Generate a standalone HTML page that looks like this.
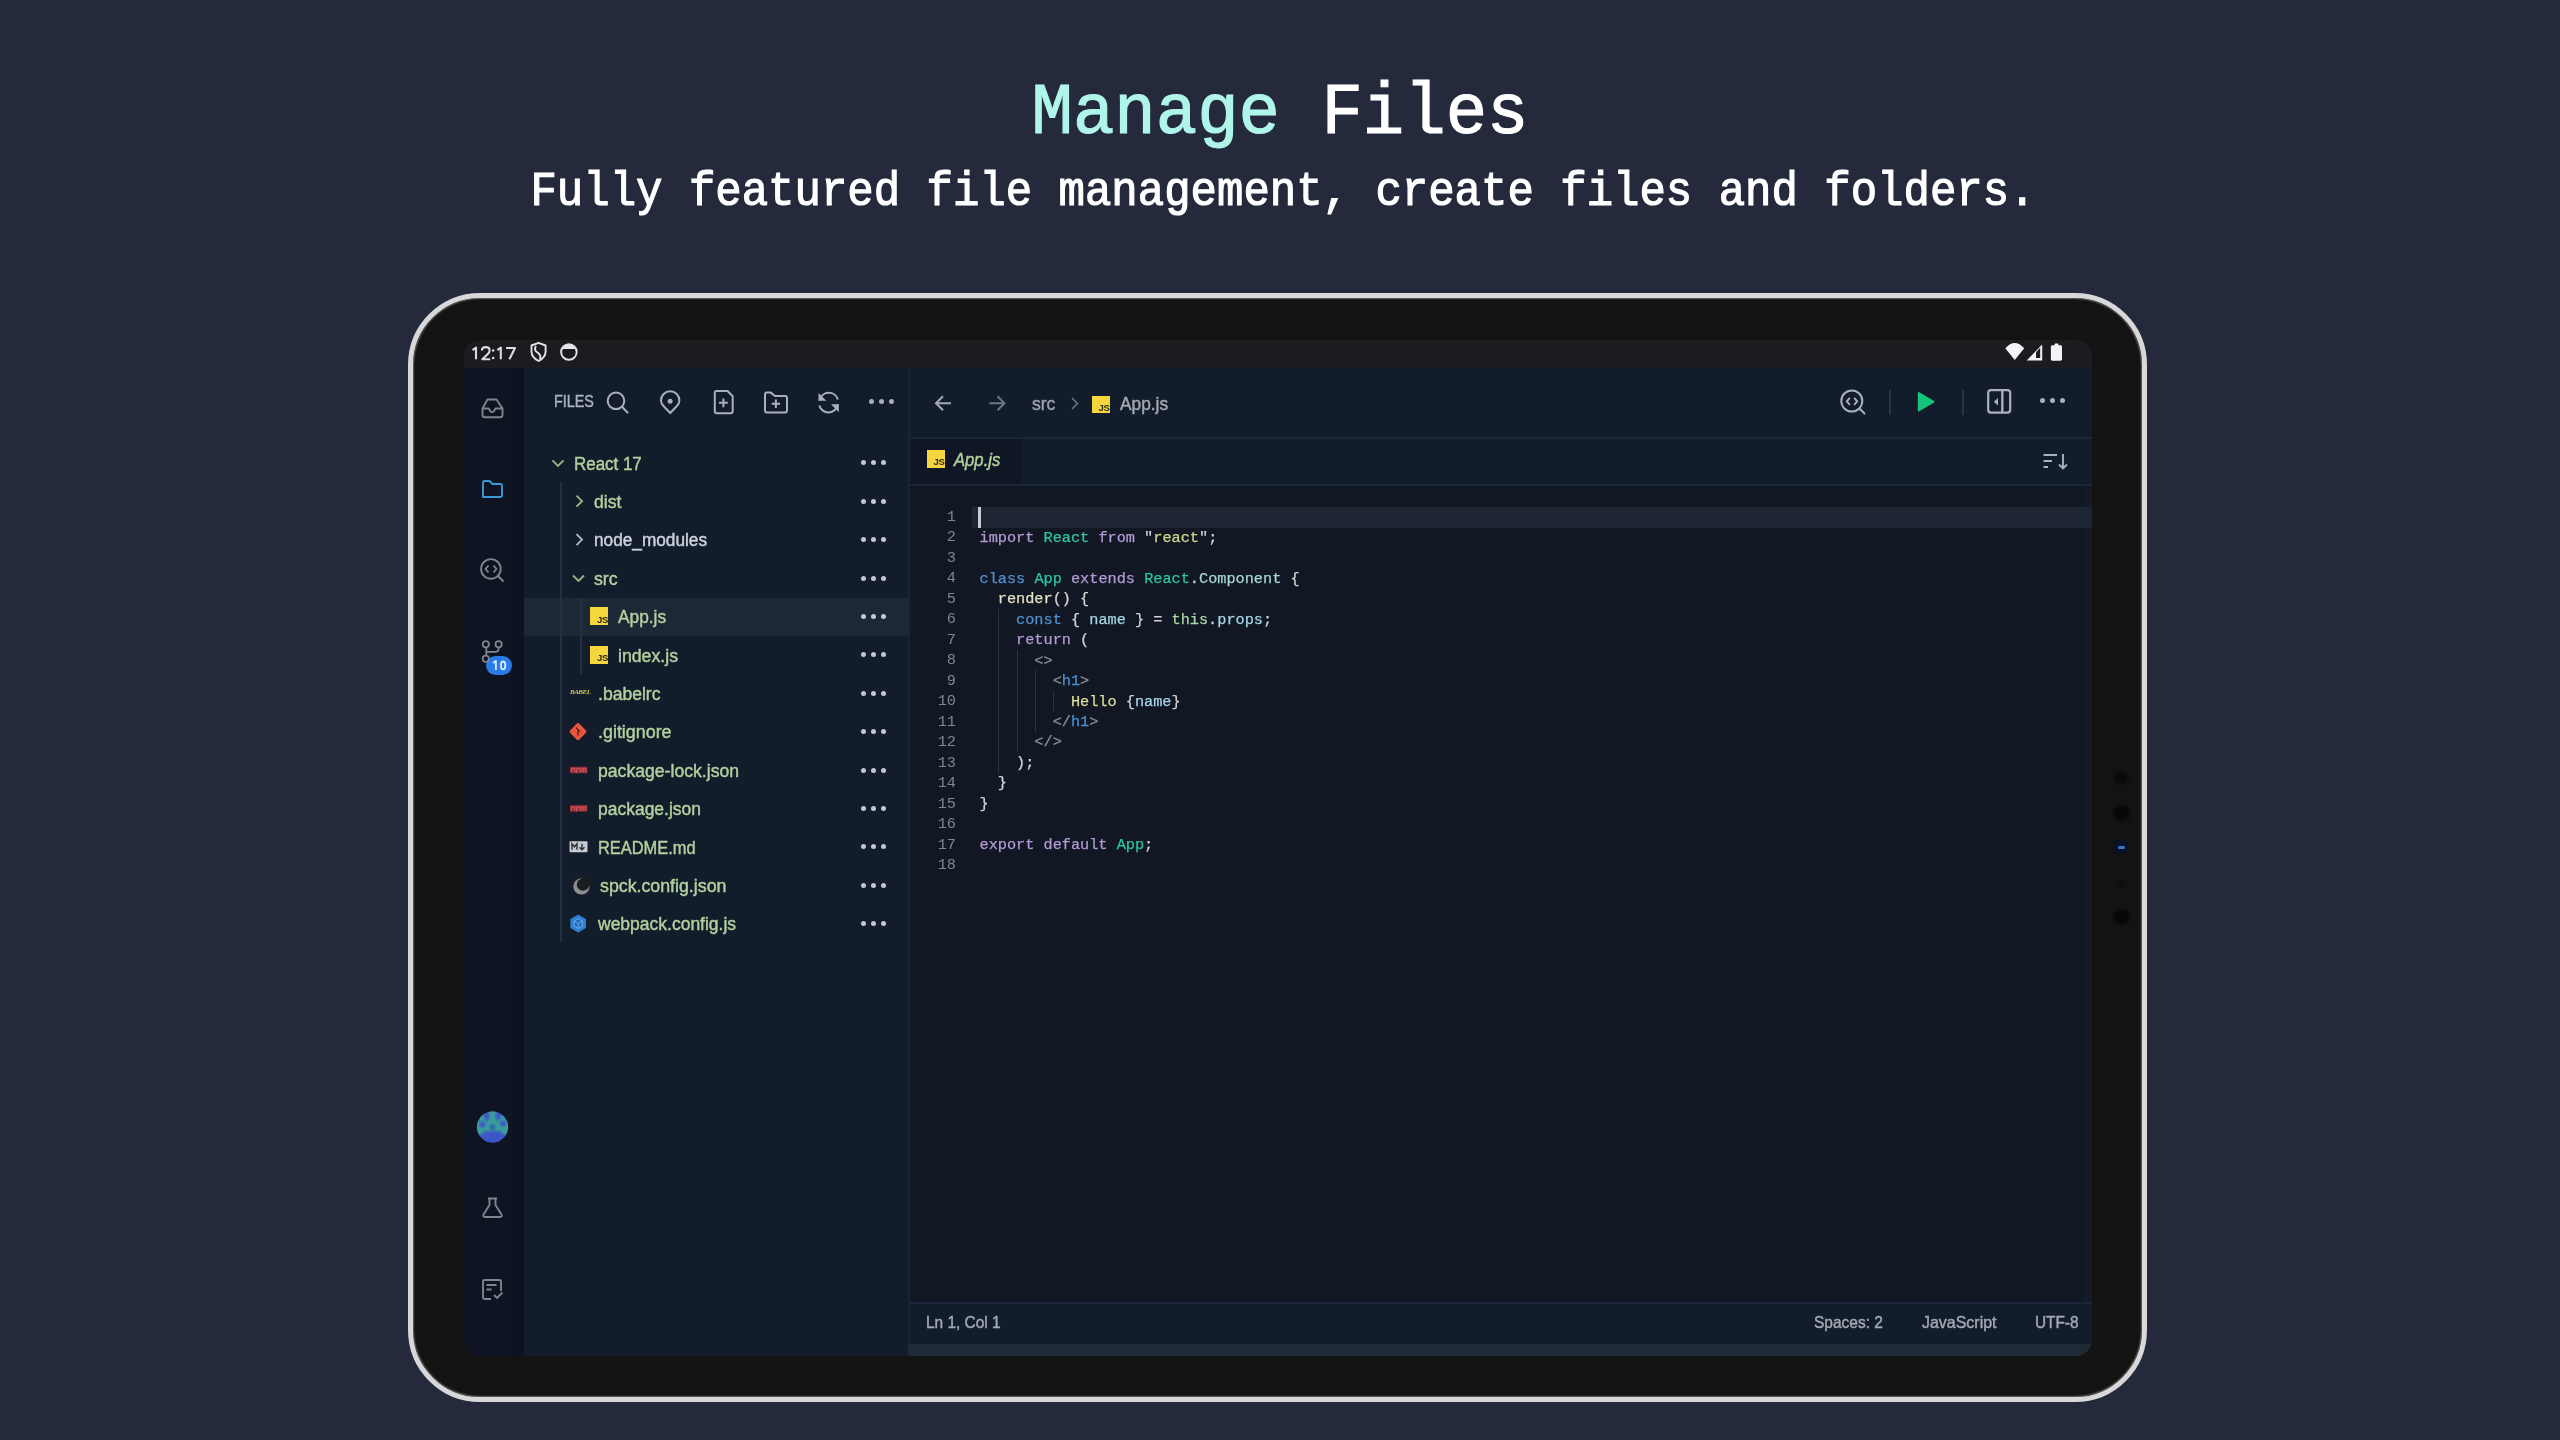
<!DOCTYPE html>
<html><head><meta charset="utf-8"><style>
html,body{margin:0;padding:0}
body{width:2560px;height:1440px;background:#24293b;position:relative;overflow:hidden;font-family:"Liberation Sans",sans-serif}
.a{position:absolute}
#title{will-change:transform;position:absolute;left:0;width:2560px;top:70px;transform:scaleY(1.05);transform-origin:50% 62px;text-align:center;font-family:"Liberation Mono",monospace;font-size:69px;line-height:90px;color:#fff;white-space:pre;-webkit-text-stroke:1.1px currentColor}
#title .m{color:#aff5ea}
#sub{will-change:transform;position:absolute;left:3px;width:2560px;top:164.5px;transform:scaleY(1.11);transform-origin:50% 39px;text-align:center;font-family:"Liberation Mono",monospace;font-size:44px;line-height:56px;color:#fff;white-space:pre;-webkit-text-stroke:1.1px currentColor}
#frame{position:absolute;left:408px;top:293px;width:1739px;height:1109px;box-sizing:border-box;border:5px solid #d8d8da;border-radius:72px;background:#131313;box-shadow:inset 0 0 1.5px 1px rgba(110,110,106,0.9)}
#screen{position:absolute;left:464px;top:340px;width:1628px;height:1016px;border-radius:16px;overflow:hidden;background:#111823}
#pc{position:absolute;left:-464px;top:-340px;width:2560px;height:1440px;will-change:transform}
svg.i{position:absolute;left:0;top:0;width:2560px;height:1440px;overflow:visible}
.t{position:absolute;white-space:pre;font-size:18px;line-height:22px;color:#b3cf9e;-webkit-text-stroke:0.45px currentColor;transform-origin:0 50%}
.d{position:absolute;width:5px;height:5px;border-radius:50%;background:#c3c8d0}
.code{position:absolute;left:979.5px;top:507.3px;font-family:"Liberation Mono",monospace;font-size:15.24px;white-space:pre;color:#d4d4d4;line-height:20.47px;-webkit-text-stroke:0.25px currentColor}
.ln{position:absolute;left:900px;top:507px;width:56px;text-align:right;font-family:"Liberation Mono",monospace;font-size:15.24px;color:#7f8690;line-height:20.47px;white-space:pre}
.kw{color:#b49ad6}.bl{color:#4f8fd0}.cl{color:#2ec4a4}.fn{color:#e6e2c4}.st{color:#d1d88a}.vr{color:#a5d6e8}.gy{color:#8a8f98}.th{color:#a9d8a5}.cp{color:#a8d8d0}.hy{color:#dcdc9a}
.g{position:absolute;width:1px;background:#2b3441}
</style></head><body>
<div id="title"><span class="m">Manage</span> Files</div>
<div id="sub">Fully featured file management, create files and folders.</div>
<div id="frame"></div>
<div id="screen"><div id="pc">
<div class="a" style="left:464px;top:340px;width:1628px;height:28px;background:#1c1b20"></div>
<div class="a" style="left:464px;top:368px;width:60px;height:988px;background:#0e1421"></div>
<div class="a" style="left:512px;top:368px;width:12px;height:988px;background:#0c1220"></div>
<div class="a" style="left:524px;top:368px;width:384px;height:988px;background:#121c2b"></div>
<div class="a" style="left:908px;top:368px;width:1184px;height:988px;background:#121c2b"></div>
<div class="a" style="left:908px;top:368px;width:2px;height:988px;background:#1a2433"></div>
<div class="a" style="left:910px;top:437px;width:1182px;height:2px;background:#1b2738"></div>
<div class="a" style="left:910px;top:439px;width:111px;height:45px;background:#0f1724"></div>
<div class="a" style="left:910px;top:484px;width:1182px;height:2px;background:#1b2738"></div>
<div class="a" style="left:910px;top:486px;width:1182px;height:816px;background:#111823"></div>
<div class="a" style="left:910px;top:1302px;width:1182px;height:2px;background:#1b2738"></div>
<div class="a" style="left:908px;top:1344px;width:1184px;height:12px;background:#1f2a37"></div>
<div class="t" style="left:553.5px;top:391.3px;font-size:16.6px;color:#a9b1bc;transform:scaleX(0.865)">FILES</div>
<div class="d" style="left:869.1px;top:399.1px;background:#aab1bb"></div><div class="d" style="left:879.1px;top:399.1px;background:#aab1bb"></div><div class="d" style="left:889.1px;top:399.1px;background:#aab1bb"></div>
<div class="a" style="left:524px;top:598px;width:384px;height:38px;background:#1e2735"></div>
<div class="a" style="left:559.5px;top:482px;width:2px;height:460px;background:#233042"></div>
<div class="a" style="left:579.5px;top:598px;width:2px;height:76px;background:#233042"></div>
<div class="t" style="left:574px;top:452.5px;color:#b3cf9e;transform:scaleX(0.941)">React 17</div>
<div class="d" style="left:861.0px;top:460.3px;background:#c3c8d0"></div><div class="d" style="left:871.0px;top:460.3px;background:#c3c8d0"></div><div class="d" style="left:881.0px;top:460.3px;background:#c3c8d0"></div>
<div class="t" style="left:594px;top:490.9px;color:#b3cf9e;transform:scaleX(0.976)">dist</div>
<div class="d" style="left:861.0px;top:498.7px;background:#c3c8d0"></div><div class="d" style="left:871.0px;top:498.7px;background:#c3c8d0"></div><div class="d" style="left:881.0px;top:498.7px;background:#c3c8d0"></div>
<div class="t" style="left:594px;top:529.3px;color:#ccd3dd;transform:scaleX(0.957)">node_modules</div>
<div class="d" style="left:861.0px;top:537.1px;background:#c3c8d0"></div><div class="d" style="left:871.0px;top:537.1px;background:#c3c8d0"></div><div class="d" style="left:881.0px;top:537.1px;background:#c3c8d0"></div>
<div class="t" style="left:594px;top:567.7px;color:#b3cf9e;transform:scaleX(0.983)">src</div>
<div class="d" style="left:861.0px;top:575.5px;background:#c3c8d0"></div><div class="d" style="left:871.0px;top:575.5px;background:#c3c8d0"></div><div class="d" style="left:881.0px;top:575.5px;background:#c3c8d0"></div>
<div class="t" style="left:618px;top:606.1px;color:#b3cf9e;transform:scaleX(0.96)">App.js</div>
<div class="d" style="left:861.0px;top:613.9px;background:#c3c8d0"></div><div class="d" style="left:871.0px;top:613.9px;background:#c3c8d0"></div><div class="d" style="left:881.0px;top:613.9px;background:#c3c8d0"></div>
<div class="a" style="left:590px;top:607.4px;width:18px;height:18px;background:#f5d63d"></div>
<div class="a" style="left:597px;top:614.9px;font-size:9.5px;line-height:10px;color:#2e2a18;font-weight:bold;letter-spacing:-0.4px">JS</div>
<div class="t" style="left:618px;top:644.5px;color:#b3cf9e;transform:scaleX(0.983)">index.js</div>
<div class="d" style="left:861.0px;top:652.3px;background:#c3c8d0"></div><div class="d" style="left:871.0px;top:652.3px;background:#c3c8d0"></div><div class="d" style="left:881.0px;top:652.3px;background:#c3c8d0"></div>
<div class="a" style="left:590px;top:645.8px;width:18px;height:18px;background:#f5d63d"></div>
<div class="a" style="left:597px;top:653.3px;font-size:9.5px;line-height:10px;color:#2e2a18;font-weight:bold;letter-spacing:-0.4px">JS</div>
<div class="t" style="left:598px;top:682.9px;color:#b3cf9e;transform:scaleX(0.975)">.babelrc</div>
<div class="d" style="left:861.0px;top:690.7px;background:#c3c8d0"></div><div class="d" style="left:871.0px;top:690.7px;background:#c3c8d0"></div><div class="d" style="left:881.0px;top:690.7px;background:#c3c8d0"></div>
<div class="a" style="left:570px;top:687.7px;font-size:7px;line-height:8px;color:#cfc25a;font-style:italic;font-weight:bold;letter-spacing:-0.5px;font-family:'Liberation Serif'">BABEL</div>
<div class="t" style="left:598px;top:721.3px;color:#b3cf9e;transform:scaleX(0.993)">.gitignore</div>
<div class="d" style="left:861.0px;top:729.1px;background:#c3c8d0"></div><div class="d" style="left:871.0px;top:729.1px;background:#c3c8d0"></div><div class="d" style="left:881.0px;top:729.1px;background:#c3c8d0"></div>
<div class="t" style="left:598px;top:759.7px;color:#b3cf9e;transform:scaleX(0.979)">package-lock.json</div>
<div class="d" style="left:861.0px;top:767.5px;background:#c3c8d0"></div><div class="d" style="left:871.0px;top:767.5px;background:#c3c8d0"></div><div class="d" style="left:881.0px;top:767.5px;background:#c3c8d0"></div>
<div class="t" style="left:598px;top:798.1px;color:#b3cf9e;transform:scaleX(0.971)">package.json</div>
<div class="d" style="left:861.0px;top:805.9px;background:#c3c8d0"></div><div class="d" style="left:871.0px;top:805.9px;background:#c3c8d0"></div><div class="d" style="left:881.0px;top:805.9px;background:#c3c8d0"></div>
<div class="t" style="left:598px;top:836.5px;color:#b3cf9e;transform:scaleX(0.912)">README.md</div>
<div class="d" style="left:861.0px;top:844.3px;background:#c3c8d0"></div><div class="d" style="left:871.0px;top:844.3px;background:#c3c8d0"></div><div class="d" style="left:881.0px;top:844.3px;background:#c3c8d0"></div>
<div class="t" style="left:600px;top:874.9px;color:#b3cf9e;transform:scaleX(0.987)">spck.config.json</div>
<div class="d" style="left:861.0px;top:882.7px;background:#c3c8d0"></div><div class="d" style="left:871.0px;top:882.7px;background:#c3c8d0"></div><div class="d" style="left:881.0px;top:882.7px;background:#c3c8d0"></div>
<div class="t" style="left:598px;top:913.3px;color:#b3cf9e;transform:scaleX(0.972)">webpack.config.js</div>
<div class="d" style="left:861.0px;top:921.1px;background:#c3c8d0"></div><div class="d" style="left:871.0px;top:921.1px;background:#c3c8d0"></div><div class="d" style="left:881.0px;top:921.1px;background:#c3c8d0"></div>
<div class="a" style="left:486px;top:656px;width:25.7px;height:19px;border-radius:9.5px;background:#2b7be6"></div>
<svg class="i"><path d="M493,663 L495.9,661 V670" fill="none" stroke="#d6ebff" stroke-width="1.8" stroke-linejoin="round"/><ellipse cx="503.1" cy="665.4" rx="2.2" ry="3.9" fill="none" stroke="#d6ebff" stroke-width="1.8"/></svg>
<div class="t" style="left:1032px;top:393px;color:#9aa1ab;transform:scaleX(0.975)">src</div>
<div class="a" style="left:1092px;top:395.5px;width:18px;height:17px;background:#f5d63d"></div>
<div class="a" style="left:1098.5px;top:402.5px;font-size:9.5px;line-height:10px;color:#2e2a18;font-weight:bold;letter-spacing:-0.4px">JS</div>
<div class="t" style="left:1120px;top:392.5px;color:#a2a9b3;transform:scaleX(0.96)">App.js</div>
<div class="a" style="left:1888.6px;top:390.3px;width:2px;height:25px;background:#293343"></div>
<div class="a" style="left:1961.6px;top:390.3px;width:2px;height:25px;background:#293343"></div>
<div class="d" style="left:2039.7px;top:398.4px;background:#aab1bb"></div><div class="d" style="left:2049.7px;top:398.4px;background:#aab1bb"></div><div class="d" style="left:2059.7px;top:398.4px;background:#aab1bb"></div>
<div class="a" style="left:927px;top:449.6px;width:18px;height:18px;background:#f5d63d"></div>
<div class="a" style="left:933.5px;top:457px;font-size:9.5px;line-height:10px;color:#2e2a18;font-weight:bold;letter-spacing:-0.4px">JS</div>
<div class="t" style="left:954px;top:448.5px;font-style:italic;color:#b3cf9e;transform:scaleX(0.925)">App.js</div>
<div class="a" style="left:2083px;top:486px;width:9px;height:816px;background:#141b27"></div>
<div class="a" style="left:972px;top:507px;width:1120px;height:20.5px;background:#1f2633"></div>
<div class="a" style="left:978px;top:507px;width:2.5px;height:20.5px;background:#c8ccd2"></div>
<div class="ln">1
2
3
4
5
6
7
8
9
10
11
12
13
14
15
16
17
18</div>
<div class="code">
<span class="kw">import</span> <span class="cl">React</span> <span class="kw">from</span> "<span class="st">react</span>";

<span class="bl">class</span> <span class="cl">App</span> <span class="kw">extends</span> <span class="cl">React</span>.<span class="cp">Component</span> {
  <span class="fn">render</span>() {
    <span class="bl">const</span> { <span class="vr">name</span> } = <span class="th">this</span>.<span class="vr">props</span>;
    <span class="kw">return</span> (
      <span class="gy">&lt;&gt;</span>
        <span class="gy">&lt;</span><span class="bl">h1</span><span class="gy">&gt;</span>
          <span class="hy">Hello</span> {<span class="vr">name</span>}
        <span class="gy">&lt;/</span><span class="bl">h1</span><span class="gy">&gt;</span>
      <span class="gy">&lt;/&gt;</span>
    );
  }
}

<span class="kw">export</span> <span class="kw">default</span> <span class="cl">App</span>;
</div>
<div class="g" style="left:998px;top:608.9px;height:163.8px"></div>
<div class="g" style="left:1016.5px;top:649.8px;height:102.3px"></div>
<div class="g" style="left:1035px;top:670.3px;height:61.4px"></div>
<div class="g" style="left:1053px;top:690.7px;height:20.5px"></div>
<div class="t" style="left:925.7px;top:1312.3px;font-size:16.6px;color:#a2a9b3;transform:scaleX(0.93)">Ln 1, Col 1</div>
<div class="t" style="left:1814.2px;top:1312.3px;font-size:16.6px;color:#a2a9b3;transform:scaleX(0.934)">Spaces: 2</div>
<div class="t" style="left:1922.2px;top:1312.3px;font-size:16.6px;color:#a2a9b3;transform:scaleX(0.962)">JavaScript</div>
<div class="t" style="left:2035.1px;top:1312.3px;font-size:16.6px;color:#a2a9b3;transform:scaleX(0.926)">UTF-8</div>
<svg class="i"><path d="M472.6,350.2 L476,347.6 V359.2 M481.9,350.6 Q481.9,347.1 485.8,347.1 Q489.6,347.1 489.6,350.4 Q489.6,352.2 487.6,354.2 L482.3,359.2 H490.2 M497.4,350.2 L500.8,347.6 V359.2 M506.1,348 H515 L509.4,359.2" fill="none" stroke="#dcdcde" stroke-width="2.1" stroke-linejoin="round"/><circle cx="493.1" cy="350.6" r="1.25" fill="#dcdcde"/><circle cx="493.1" cy="358" r="1.25" fill="#dcdcde"/><path d="M552.5,460.3 L558,465.8 L563.5,460.3" fill="none" stroke="#b3cf9e" stroke-opacity="0.85" stroke-width="1.9"/><path d="M576.5,495.7 L582,501.2 L576.5,506.7" fill="none" stroke="#b3cf9e" stroke-opacity="0.85" stroke-width="1.9"/><path d="M576.5,534.1 L582,539.6 L576.5,545.1" fill="none" stroke="#ccd3dd" stroke-opacity="0.85" stroke-width="1.9"/><path d="M573.0,575.5 L578.5,581.0 L584.0,575.5" fill="none" stroke="#b3cf9e" stroke-opacity="0.85" stroke-width="1.9"/><rect x="571.5" y="725.1" width="13" height="13" rx="2" transform="rotate(45 578 731.6)" fill="#e8553a"/><path d="M576,727.6 L580,731.6 M578,730.6 L578,735.6" stroke="#4a1a10" stroke-width="1.2" fill="none"/><rect x="570" y="766.8" width="17.3" height="6.4" fill="#9a3037"/><path d="M571.5,772.2 v-3.6 h3.4 v3.6 M576.5,773.0 v-4.4 h3.6 v3.4 M581.6,772.2 v-3.6 h4.2 v3.6 M583.7,768.6 v3.6" stroke="#c9575d" stroke-width="1" fill="none"/><rect x="570" y="805.1999999999999" width="17.3" height="6.4" fill="#9a3037"/><path d="M571.5,810.6 v-3.6 h3.4 v3.6 M576.5,811.4 v-4.4 h3.6 v3.4 M581.6,810.6 v-3.6 h4.2 v3.6 M583.7,807.0 v3.6" stroke="#c9575d" stroke-width="1" fill="none"/><rect x="569.5" y="841.3" width="18" height="11" rx="1" fill="#c8ccd2"/><path d="M572,849.8 v-6 l2.5,3 l2.5,-3 v6 M582,843.8 v6 M579.5,847.3 l2.5,2.5 l2.5,-2.5" stroke="#2a2f38" stroke-width="1.4" fill="none"/><circle cx="581.4" cy="886.0" r="9.2" fill="#202326"/><circle cx="581.4" cy="886.5" r="8" fill="#8d8e90"/><circle cx="583" cy="884.6" r="6.2" fill="#1a1d21"/><path d="M581.4,877.2 A8.5,8.5 0 0 1 589.9,885.2 L583,884.6 Z" fill="#1a1d21"/><path d="M578.2,914.6 L586,919.1 V928.1 L578.2,932.6 L570.4,928.1 V919.1 Z" fill="#2f7fd2"/><path d="M578.2,918.8000000000001 L582.3,921.2 V926.0 L578.2,928.4 L574.1,926.0 V921.2 Z M578.2,923.6 L582.3,921.2 M578.2,923.6 V928.4 M578.2,923.6 L574.1,921.2" fill="#2467b8" stroke="#6ab8f0" stroke-width="0.9"/><path d="M482.5,408.5 L487.5,399.5 H496.5 L502.5,408.5" fill="none" stroke="#7d8591" stroke-width="1.9" stroke-linejoin="round"/><path d="M482.5,408.5 V415 Q482.5,417.2 484.7,417.2 H500.3 Q502.5,417.2 502.5,415 V408.5 H495.5 L494,411 Q493.3,412 492.2,412 H492 Q490.8,412 490.2,411 L488.7,408.5 Z" fill="none" stroke="#7d8591" stroke-width="1.9" stroke-linejoin="round"/><path d="M483,497 V482.5 Q483,481 484.5,481 H489.5 L492.5,484 H500.5 Q502,484 502,485.5 V495.5 Q502,497 500.5,497 Z" fill="none" stroke="#3b9ad8" stroke-width="1.9" stroke-linejoin="round"/><circle cx="490.9" cy="568.9" r="9.8" fill="none" stroke="#7d8591" stroke-width="1.9"/><path d="M498,576 L503,581" stroke="#7d8591" stroke-width="1.9" stroke-linecap="round"/><path d="M488.5,565.5 L485.5,569 L488.5,572.5 M493.5,565.5 L496.5,569 L493.5,572.5" fill="none" stroke="#7d8591" stroke-width="1.8"/><circle cx="485.8" cy="644.3" r="3.1" fill="none" stroke="#7d8591" stroke-width="1.8"/><circle cx="498.6" cy="644.3" r="3.1" fill="none" stroke="#7d8591" stroke-width="1.8"/><circle cx="485.8" cy="658.8" r="3.1" fill="none" stroke="#7d8591" stroke-width="1.8"/><path d="M486.3,647.4 V655.7 M486.3,651.8 H495.5 Q498.6,651.8 498.6,648.7 V647.4" fill="none" stroke="#7d8591" stroke-width="1.8"/><defs><clipPath id="avc"><circle cx="492.5" cy="1127" r="15.6"/></clipPath><filter id="avb" x="-20%" y="-20%" width="140%" height="140%"><feGaussianBlur stdDeviation="1.1"/></filter></defs><g clip-path="url(#avc)"><rect x="476" y="1110" width="33" height="34" fill="#3d56c6"/><g filter="url(#avb)"><rect x="470" y="1121" width="45" height="10" fill="#3a9e98"/><rect x="488.5" y="1108" width="8" height="15" fill="#3a9e98"/><circle cx="482.5" cy="1117.5" r="4" fill="#3a9e98"/><circle cx="502.5" cy="1118.5" r="4" fill="#3a9e98"/><circle cx="480" cy="1131" r="3.5" fill="#3a9e98"/><circle cx="504.5" cy="1131" r="3.5" fill="#3a9e98"/><circle cx="486.5" cy="1116" r="3.3" fill="#3d56c6"/><circle cx="498.5" cy="1116" r="3.3" fill="#3d56c6"/><circle cx="482.5" cy="1124.5" r="3.2" fill="#3d56c6"/><circle cx="503" cy="1123.5" r="3.2" fill="#3d56c6"/><circle cx="492.5" cy="1127" r="3.2" fill="#2f6aae"/><rect x="485" y="1132" width="15" height="14" fill="#3d56c6"/></g></g><path d="M488,1198.5 H497 M489.5,1198.5 V1205 L483.5,1214.5 Q482.5,1217 485,1217 H500 Q502.5,1217 501.5,1214.5 L495.5,1205 V1198.5" fill="none" stroke="#7d8591" stroke-width="1.9" stroke-linejoin="round"/><path d="M491,1299 H484.5 Q483,1299 483,1297.5 V1281.5 Q483,1280 484.5,1280 H499.5 Q501,1280 501,1281.5 V1291" fill="none" stroke="#7d8591" stroke-width="1.9" stroke-linejoin="round"/><path d="M486.5,1285 H496.5 M486.5,1289.5 H491.5 M494,1295 L497,1298 L502.5,1292.5" fill="none" stroke="#7d8591" stroke-width="1.9"/><circle cx="616" cy="400.8" r="8.3" fill="none" stroke="#aab1bb" stroke-width="2"/><path d="M622,406.8 L627.5,412.5" stroke="#aab1bb" stroke-width="2" stroke-linecap="round"/><path d="M670.2,413 L663.5,406 Q661,403.5 661,400.5 A9.2,9.2 0 0 1 679.4,400.5 Q679.4,403.5 676.9,406 Z" fill="none" stroke="#aab1bb" stroke-width="2" stroke-linejoin="round"/><circle cx="670.1" cy="401.2" r="2.5" fill="#aab1bb"/><path d="M716.5,391 H727.5 L732.7,396.2 V411 Q732.7,413.3 730.5,413.3 H717 Q714.8,413.3 714.8,411 V393 Q714.8,391 716.5,391 Z" fill="none" stroke="#aab1bb" stroke-width="2" stroke-linejoin="round"/><path d="M723.4,398.5 V407.2 M719,402.8 H727.8" stroke="#aab1bb" stroke-width="2"/><path d="M765,410.5 V394.5 Q765,392.4 767,392.4 H770.5 L775,396 H785 Q787,396 787,398 V410.5 Q787,412.4 785,412.4 H767 Q765,412.4 765,410.5 Z" fill="none" stroke="#aab1bb" stroke-width="2" stroke-linejoin="round"/><path d="M775.9,399.5 V408 M771.7,403.7 H780.1" stroke="#aab1bb" stroke-width="2"/><path d="M819.3,405.5 A9.5,9.5 0 0 0 837.8,404.5 M837.9,399.5 A9.5,9.5 0 0 0 819.5,400.5" fill="none" stroke="#aab1bb" stroke-width="2"/><path d="M818.5,393 V400.8 H826.3 Z" fill="#aab1bb"/><path d="M838.8,412.2 V404.3 H831 Z" fill="#aab1bb"/><path d="M936.5,403.2 H951 M943,396.2 L936,403.2 L943,410.2" fill="none" stroke="#a2a9b3" stroke-width="2"/><path d="M989.5,403.2 H1004 M997.5,396.2 L1004.5,403.2 L997.5,410.2" fill="none" stroke="#6e7682" stroke-width="2"/><path d="M1072,398 L1077.5,403.5 L1072,409" fill="none" stroke="#6e7682" stroke-width="1.6"/><circle cx="1851.8" cy="401" r="10.5" fill="none" stroke="#aab1bb" stroke-width="2"/><path d="M1859.5,408.5 L1864.5,413.5" stroke="#aab1bb" stroke-width="2" stroke-linecap="round"/><path d="M1849.8,397.8 L1846.8,401.3 L1849.8,404.8 M1854.2,397.8 L1857.2,401.3 L1854.2,404.8" fill="none" stroke="#aab1bb" stroke-width="1.9"/><path d="M1917.8,393 Q1917.8,391.5 1919.2,392.3 L1933.8,400.8 Q1935,401.8 1933.8,402.8 L1919.2,411.3 Q1917.8,412.1 1917.8,410.6 Z" fill="#16c47c"/><rect x="1988.2" y="390.2" width="22" height="22.4" rx="2.8" fill="none" stroke="#aab1bb" stroke-width="2.2"/><path d="M2002.3,390.5 V412.5" stroke="#aab1bb" stroke-width="2.4"/><path d="M1998,398 V405.5 L1993.8,401.75 Z" fill="#aab1bb"/><path d="M2043.5,455 H2057 M2043.5,461 H2052 M2043.5,467 H2048 M2063,454 V468.5 M2059,464.5 L2063,468.5 L2067,464.5" fill="none" stroke="#aab1bb" stroke-width="1.9"/><path d="M531.5,345.5 L538.6,342.8 L545.6,345.5 V351.5 Q545.6,357.5 538.6,361 Q531.5,357.5 531.5,351.5 Z" fill="none" stroke="#e4e4e6" stroke-width="1.9" stroke-linejoin="round"/><path d="M536,346 Q533.5,350 537.5,352.5 Q541.5,355 540,359.5" fill="none" stroke="#e4e4e6" stroke-width="1.9"/><circle cx="568.9" cy="352" r="7.8" fill="none" stroke="#e4e4e6" stroke-width="1.9"/><path d="M562.5,349 A7,7 0 0 1 575.3,349 Z" fill="#e8e8ea"/><path d="M2005.3,348.3 Q2014.75,337.8 2024.2,348.3 L2014.75,359.9 Z" fill="#f4f4f6"/><path d="M2026.7,360.5 L2042.2,344.4 V360.5 Z" fill="#f4f4f6"/><path d="M2036,358 V352.2 L2040.2,347.8 V358 Z" fill="#1c1b20"/><rect x="2050.9" y="345.3" width="11.1" height="15.4" rx="1.4" fill="#f4f4f6"/><rect x="2054.6" y="343.6" width="3.8" height="2.5" rx="0.6" fill="#f4f4f6"/></svg>
</div></div>
<div class="a" style="left:2114.0px;top:772.0px;width:14px;height:12px;border-radius:50%;background:#090909;filter:blur(1.5px)"></div>
<div class="a" style="left:2112.5px;top:805.5px;width:17px;height:15px;border-radius:50%;background:#070707;filter:blur(1.5px)"></div>
<div class="a" style="left:2117.5px;top:881.5px;width:7px;height:5px;border-radius:50%;background:#0c0c0c;filter:blur(1.5px)"></div>
<div class="a" style="left:2112.5px;top:910.0px;width:17px;height:14px;border-radius:50%;background:#070707;filter:blur(1.5px)"></div>
<div class="a" style="left:2114px;top:840px;width:14px;height:14px;border-radius:50%;background:#06122e;filter:blur(1px)"></div>
<div class="a" style="left:2117.5px;top:845.5px;width:7px;height:3px;background:#3f73c8;border-radius:1.5px;filter:blur(0.4px)"></div>
</body></html>
